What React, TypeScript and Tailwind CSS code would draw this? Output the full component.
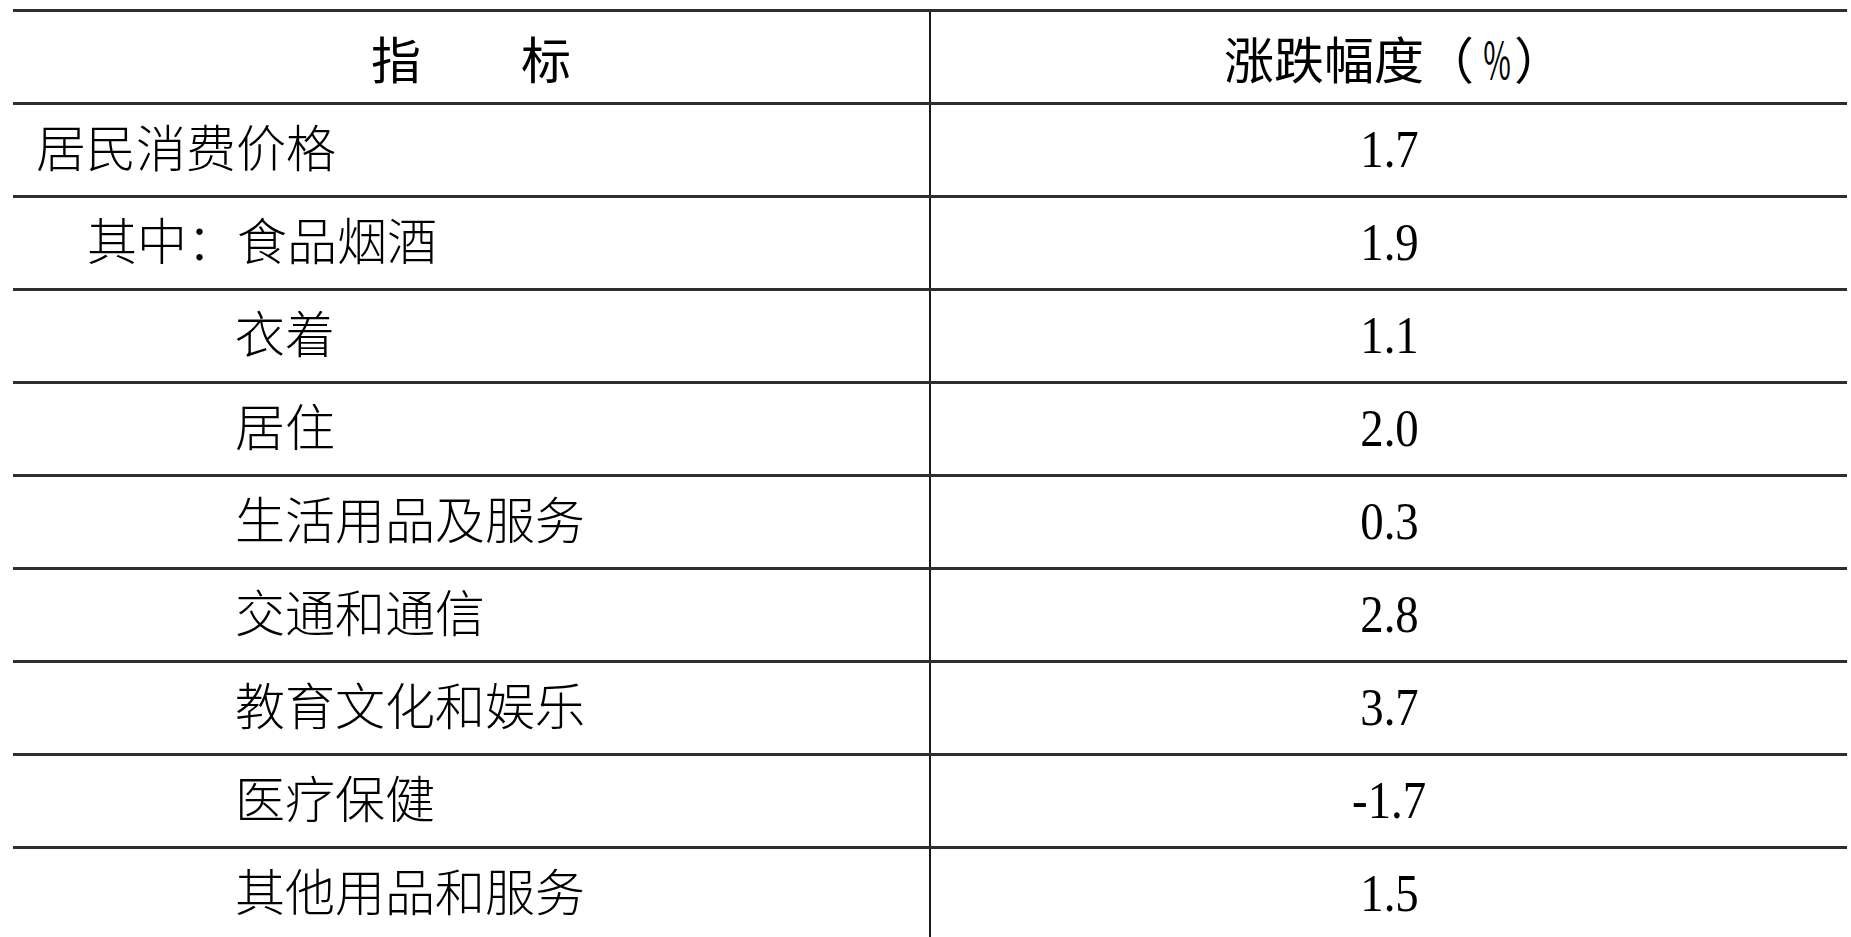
import React from "react";

const rows: { label: string; indent: string; value: string }[] = [
  { label: "居民消费价格", indent: "pl-[23px]", value: "1.7" },
  { label: "其中：食品烟酒", indent: "pl-[74px]", value: "1.9" },
  { label: "衣着", indent: "pl-[222px]", value: "1.1" },
  { label: "居住", indent: "pl-[222px]", value: "2.0" },
  { label: "生活用品及服务", indent: "pl-[222px]", value: "0.3" },
  { label: "交通和通信", indent: "pl-[222px]", value: "2.8" },
  { label: "教育文化和娱乐", indent: "pl-[222px]", value: "3.7" },
  { label: "医疗保健", indent: "pl-[222px]", value: "-1.7" },
  { label: "其他用品和服务", indent: "pl-[222px]", value: "1.5" },
];

export default function App() {
  return (
    <div className="w-[1851px] h-[937px] overflow-hidden bg-white text-black">
      <div className="ml-[13px] mt-[9px] w-[1834px] border-t-[3px] border-[#2e2e2e]">
        <div className="flex h-[93px] border-b-[3px] border-[#2e2e2e]">
          <div className="w-[918px] shrink-0 border-r-2 border-[#1a1a1a] flex items-center justify-center font-['Noto_Sans_CJK_SC',sans-serif] text-[50px] leading-none whitespace-pre">
            指　　标
          </div>
          <div className="flex-1 flex items-center justify-center font-['Noto_Sans_CJK_SC',sans-serif] text-[50px] leading-none pl-[10px]">
            <span>涨跌幅度（</span>
            <span className="inline-block w-[40px] text-center">
              <span className="inline-block scale-x-[0.6] origin-center">%</span>
            </span>
            <span>）</span>
          </div>
        </div>
        {rows.map((r) => (
          <div key={r.label} className="flex h-[93px] border-b-[3px] border-[#2e2e2e]">
            <div
              className={`w-[918px] shrink-0 border-r-2 border-[#1a1a1a] flex items-center ${r.indent} font-['Liberation_Serif','Noto_Sans_CJK_SC',serif] font-[300] text-[50px] leading-none`}
            >
              {r.label}
            </div>
            <div className="flex-1 flex items-center justify-center font-['Liberation_Serif',serif] text-[52px] leading-none">
              <span className="inline-block scale-x-[0.9]">{r.value}</span>
            </div>
          </div>
        ))}
      </div>
    </div>
  );
}
